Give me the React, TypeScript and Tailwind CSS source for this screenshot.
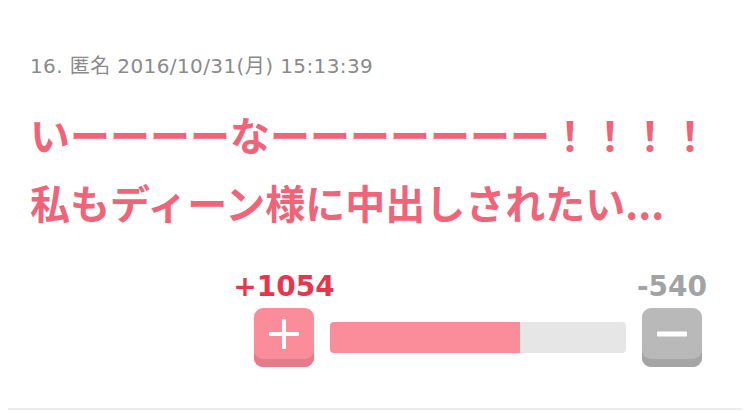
const votes = { up: 1054, down: 540 };

function PlusIcon() {
  return (
    <svg width="30" height="30" viewBox="0 0 30 30" aria-hidden="true">
      <rect x="13" y="0" width="4" height="30" rx="1" fill="#ffffff" />
      <rect x="0" y="13" width="30" height="4" rx="1" fill="#ffffff" />
    </svg>
  );
}

function MinusIcon() {
  return (
    <svg width="30" height="6" viewBox="0 0 30 6" aria-hidden="true">
      <rect x="0" y="0.5" width="30" height="5" rx="1" fill="#ffffff" />
    </svg>
  );
}

export default function App() {
  const ratio = votes.up / (votes.up + votes.down);
  return (
    <div className="w-[750px] h-[411px] bg-white overflow-hidden">
      <div className="mx-2 h-[410px] border-b-2 border-[#ececec] px-[22px] pt-[53px]">
        <div
          className="text-[20px] leading-[26px] tracking-[0.4px] text-[#8a8a8a]"
          style={{ fontFamily: '"DejaVu Sans", "Noto Sans CJK JP", sans-serif' }}
        >
          16. 匿名 2016/10/31(月) 15:13:39
        </div>
        <div
          className="mt-[21px] text-[40px] leading-[68px] font-bold text-[#f0647a]"
          style={{ fontFamily: '"Noto Sans CJK JP", sans-serif' }}
        >
          <div>いーーーーなーーーーーーー！！！！</div>
          <div>私もディーン様に中出しされたい...</div>
        </div>
        <div className="mt-[37px] flex justify-end pr-[18px]">
          <div className="flex items-end gap-4">
            <div className="flex w-[60px] flex-col items-center">
              <div
                className="whitespace-nowrap text-[28px] leading-[27px] font-bold text-[#e8354d]"
                style={{ fontFamily: '"DejaVu Sans", sans-serif' }}
              >
                +{votes.up}
              </div>
              <button className="mt-2 flex h-[59px] w-[60px] items-center justify-center rounded-[9px] bg-[#fb8d9b] pb-[8px] shadow-[inset_0_-8px_0_#e47a8a]">
                <PlusIcon />
              </button>
            </div>
            <div className="mb-[14px] h-[31px] w-[296px] overflow-hidden rounded-[4px] bg-[#e6e6e6]">
              <div className="h-full bg-[#fb8d9b]" style={{ width: `${ratio * 97}%` }} />
            </div>
            <div className="flex w-[60px] flex-col items-center">
              <div
                className="whitespace-nowrap text-[28px] leading-[27px] font-bold text-[#a3a3a3]"
                style={{ fontFamily: '"DejaVu Sans", sans-serif' }}
              >
                -{votes.down}
              </div>
              <button className="mt-2 flex h-[59px] w-[60px] items-center justify-center rounded-[9px] bg-[#b9b9b9] pb-[8px] shadow-[inset_0_-8px_0_#a5a5a5]">
                <MinusIcon />
              </button>
            </div>
          </div>
        </div>
      </div>
    </div>
  );
}
